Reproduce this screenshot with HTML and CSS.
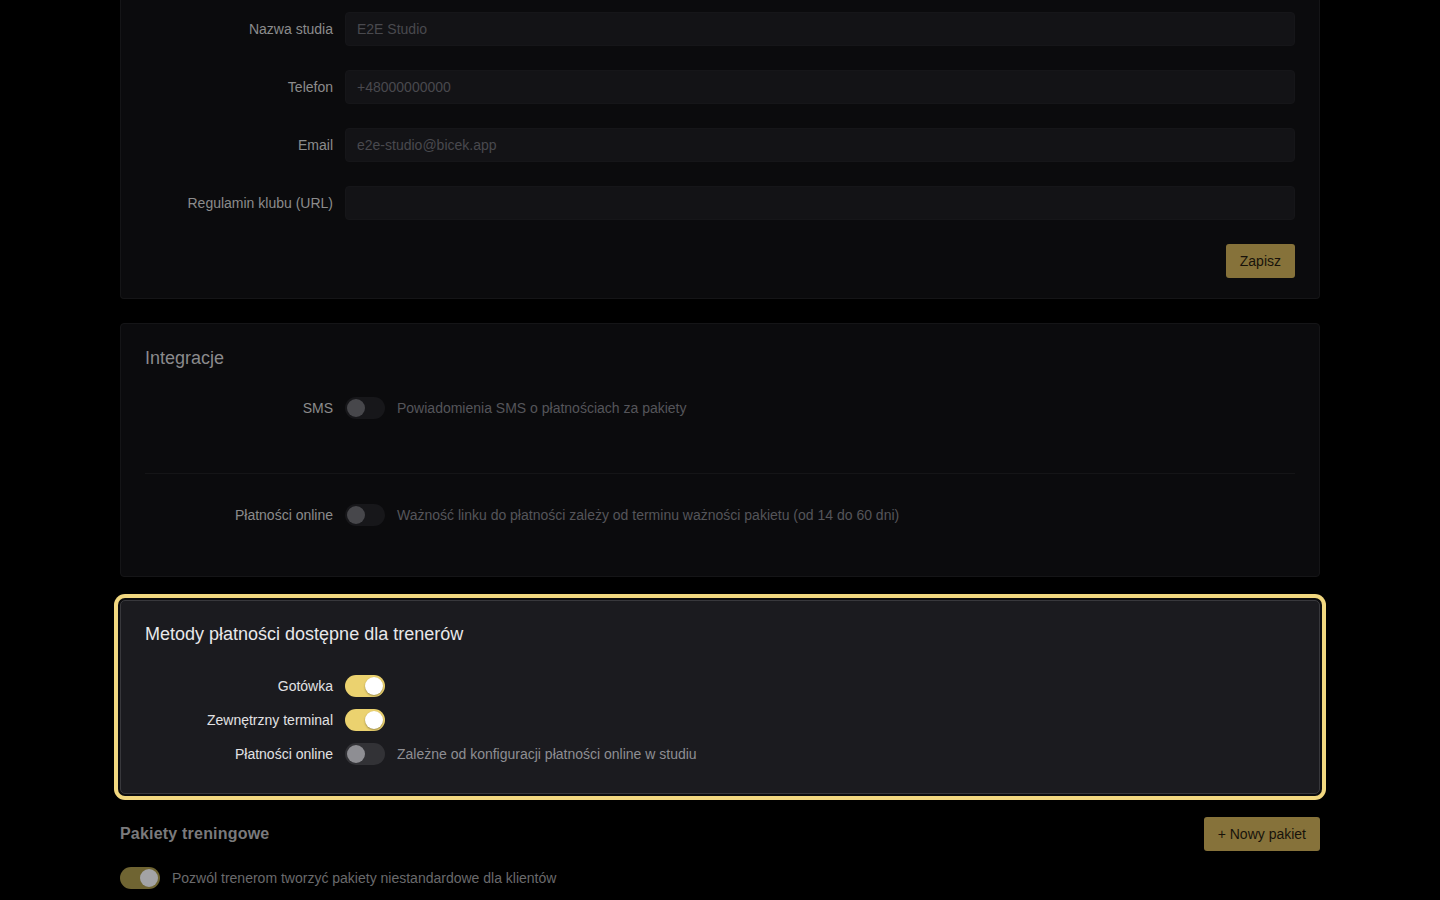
FILE: index.html
```html
<!DOCTYPE html>
<html lang="pl">
<head>
    <meta charset="UTF-8">
    <meta name="viewport" content="width=device-width, initial-scale=1.0">
    <title>Ustawienia studia</title>
    <link rel="stylesheet" href="styles.css">
</head>
<body>

    <div class="container">

        <div class="card card-studio">
            <div class="form-row">
                <label class="form-label">Nazwa studia</label>
                <input class="form-input" type="text" value="E2E Studio">
            </div>
            <div class="form-row">
                <label class="form-label">Telefon</label>
                <input class="form-input" type="text" value="+48000000000">
            </div>
            <div class="form-row">
                <label class="form-label">Email</label>
                <input class="form-input" type="text" value="e2e-studio@bicek.app">
            </div>
            <div class="form-row">
                <label class="form-label">Regulamin klubu (URL)</label>
                <input class="form-input" type="text" value="">
            </div>
            <div class="form-actions">
                <button class="btn-gold">Zapisz</button>
            </div>
        </div>

        <div class="card card-integrations">
            <h3 class="card-title">Integracje</h3>
            <div class="integration integration-sms">
                <div class="switch-row">
                    <span class="form-label">SMS</span>
                    <span class="switch"></span>
                    <span class="switch-hint">Powiadomienia SMS o płatnościach za pakiety</span>
                </div>
            </div>
            <div class="integration">
                <div class="switch-row">
                    <span class="form-label">Płatności online</span>
                    <span class="switch"></span>
                    <span class="switch-hint">Ważność linku do płatności zależy od terminu ważności pakietu (od 14 do 60 dni)</span>
                </div>
            </div>
        </div>

        <div class="card card-methods active">
            <h3 class="card-title">Metody płatności dostępne dla trenerów</h3>
            <div class="methods">
                <div class="switch-row">
                    <span class="form-label">Gotówka</span>
                    <span class="switch on"></span>
                </div>
                <div class="switch-row">
                    <span class="form-label">Zewnętrzny terminal</span>
                    <span class="switch on"></span>
                </div>
                <div class="switch-row">
                    <span class="form-label">Płatności online</span>
                    <span class="switch"></span>
                    <span class="switch-hint">Zależne od konfiguracji płatności online w studiu</span>
                </div>
            </div>
        </div>

        <div class="packages-head">
            <h3>Pakiety treningowe</h3>
            <button class="btn-gold">+ Nowy pakiet</button>
        </div>
        <div class="packages-option">
            <span class="switch on"></span>
            <span>Pozwól trenerom tworzyć pakiety niestandardowe dla klientów</span>
        </div>

    </div>

</body>
</html>
```

FILE: styles.css
```css
body {
    font-family: "Liberation Sans", Arial, sans-serif;
    font-size: 14px;
    background-color: #000;
    color: #8c8c8c;
    margin: 0;
}
.container {
    width: 1200px;
    margin: 0 auto;
}

/* cards */
.card {
    background-color: #0b0b0d;
    border: 1px solid #151517;
    border-radius: 4px;
    padding: 20px 24px 20px 24px;
    margin-bottom: 24px;
}
.card-title {
    margin: 0;
    font-size: 18px;
    font-weight: normal;
    line-height: 26px;
    color: #8a8a8c;
}

/* studio details form */
.card-studio {
    border-top: none;
    border-radius: 0 0 4px 4px;
    padding-top: 12px;
    padding-bottom: 20px;
}
.form-row {
    display: flex;
    align-items: center;
    gap: 12px;
    margin-bottom: 24px;
}
.form-label {
    width: 188px;
    flex-shrink: 0;
    text-align: right;
    color: #8c8c8c;
}
.form-input {
    flex: 1;
    height: 34px;
    box-sizing: border-box;
    background-color: #131316;
    border: 1px solid #161619;
    border-radius: 4px;
    padding: 0 11px;
    font-family: inherit;
    font-size: 14px;
    color: #49494e;
    outline: none;
}
.form-actions {
    display: flex;
    justify-content: flex-end;
}
.btn-gold {
    height: 34px;
    padding: 0 14px;
    background-color: #86723a;
    color: #17120a;
    border: none;
    border-radius: 3px;
    font-family: inherit;
    font-size: 14px;
    cursor: pointer;
}

/* switches */
.switch-row {
    display: flex;
    align-items: center;
    gap: 12px;
    min-height: 34px;
}
.switch {
    position: relative;
    width: 40px;
    height: 22px;
    flex-shrink: 0;
    border-radius: 11px;
    background-color: #17171a;
}
.switch::after {
    content: "";
    position: absolute;
    top: 2px;
    left: 2px;
    width: 18px;
    height: 18px;
    border-radius: 50%;
    background-color: #47474b;
}
.switch.on::after {
    left: 20px;
}
.switch-hint {
    color: #55555a;
}

/* integrations */
.card-integrations {
    padding-top: 21px;
    margin-bottom: 23px;
}
.integration {
    padding: 24px 0;
}
.integration-sms {
    padding-top: 20px;
    padding-bottom: 48px;
    border-bottom: 1px solid #151517;
}

/* payment methods, currently in focus */
.card-methods {
    margin-bottom: 23px;
    padding-bottom: 22px;
}
.card-methods.active {
    background-color: #1b1b1f;
    border-color: #38383c;
    border-radius: 5px;
    box-shadow: 0 0 0 2px #0c0c0e, 0 0 0 6px #f2d880;
}
.card-methods .card-title {
    color: #e8e8ea;
}
.methods {
    margin-top: 22px;
}
.card-methods .form-label {
    color: #e2e2e4;
}
.card-methods .switch {
    background-color: #323236;
}
.card-methods .switch::after {
    background-color: #8e8e93;
}
.card-methods .switch.on {
    background-color: #ebd26f;
}
.card-methods .switch.on::after {
    background-color: #fff;
    box-shadow: 0 1px 2px rgba(0, 0, 0, 0.35);
}
.card-methods .switch-hint {
    color: #8e8e93;
}

/* training packages */
.packages-head {
    display: flex;
    justify-content: space-between;
    align-items: center;
}
.packages-head h3 {
    margin: 0;
    font-size: 16px;
    letter-spacing: 0.2px;
    color: #7a7a7c;
}
.packages-option {
    display: flex;
    align-items: center;
    gap: 12px;
    margin-top: 16px;
    color: #6a6a6c;
}
.packages-option .switch.on {
    background-color: #6f6432;
}
.packages-option .switch.on::after {
    background-color: #a3a3a6;
}
```
